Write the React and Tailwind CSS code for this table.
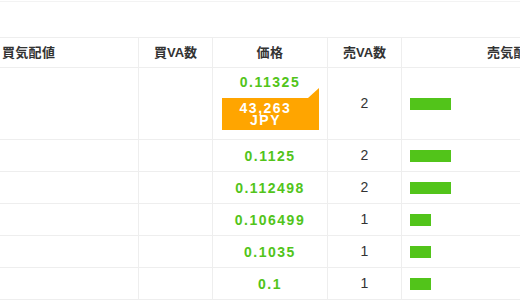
import React from "react";

const rows = [
  { price: "0.11325", count: 2, jpy: "43,263" },
  { price: "0.1125", count: 2 },
  { price: "0.112498", count: 2 },
  { price: "0.106499", count: 1 },
  { price: "0.1035", count: 1 },
  { price: "0.1", count: 1 },
];

const font = { fontFamily: '"Liberation Sans", "Noto Sans CJK JP", sans-serif' };

const grid = "grid grid-cols-[138px_74px_115px_74px_1fr] border-b border-[#eeeeee]";
const cell = "border-l border-[#eeeeee]";

const Row = ({ row }) => {
  const current = !!row.jpy;
  return (
    <div className={`${grid} ${current ? "h-[72px]" : "h-[32px]"}`}>
      <div />
      <div className={cell} />
      <div className={`${cell} flex flex-col items-center ${current ? "pt-[4px]" : "justify-center"}`}>
        <span className="text-[14px] leading-[20px] font-bold tracking-[1.5px] text-[#52c41a]">{row.price}</span>
        {current && (
          <div className="relative mt-[6px] w-[97px] h-[32px] bg-[#ffa500] pt-[4px] pr-[9px] flex flex-col items-center text-white font-bold text-[14px] leading-[12px] tracking-[1.5px]">
            <svg className="absolute right-0 top-[-10px]" width="11" height="10" viewBox="0 0 11 10">
              <path d="M0 10 L11 0 L11 10 Z" fill="#ffa500" />
            </svg>
            <span>{row.jpy}</span>
            <span>JPY</span>
          </div>
        )}
      </div>
      <div className={`${cell} flex items-center justify-center text-[14px] text-[#333333]`}>{row.count}</div>
      <div className={`${cell} flex items-center pl-[8px]`}>
        <div className="h-[12px] bg-[#52c41a]" style={{ width: Math.round(row.count * 20.5) }} />
      </div>
    </div>
  );
};

export default function App() {
  return (
    <div className="w-[520px] h-[300px] overflow-hidden bg-white" style={font}>
      <div className="mt-[1px] h-[36px] border-t border-[#f3f3f3]" />
      <div className={`${grid} border-t h-[31px] text-[13px] font-bold text-[#333333] whitespace-nowrap`}>
        <div className="flex items-center pl-[2px] tracking-[0.3px]">買気配値</div>
        <div className={`${cell} flex items-center justify-center`}>買VA数</div>
        <div className={`${cell} flex items-center justify-center tracking-[0.5px]`}>価格</div>
        <div className={`${cell} flex items-center justify-center`}>売VA数</div>
        <div className={`${cell} flex items-center pl-[85px] tracking-[0.3px]`}>売気配値</div>
      </div>
      {rows.map((r) => (
        <Row key={r.price} row={r} />
      ))}
    </div>
  );
}
